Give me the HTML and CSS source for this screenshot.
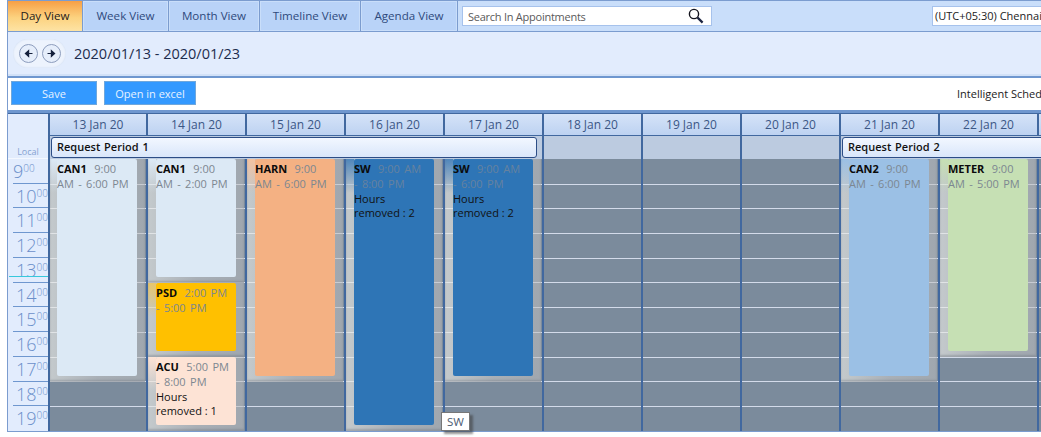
FILE: index.html
```html
<!DOCTYPE html>
<html>

<head>
    <title>Scheduler</title>
    <link rel="stylesheet" href="styles.css">
</head>

<body>
    <div class="scheduler">
        <div class="tabs">
            <a class="tab active tab-day">Day View</a>
            <a class="tab tab-week">Week View</a>
            <a class="tab tab-month">Month View</a>
            <a class="tab tab-timeline">Timeline View</a>
            <a class="tab tab-agenda">Agenda View</a>
            <div class="search">
                <span>Search In Appointments</span>
                <svg width="16" height="16" viewBox="0 0 16 16">
                    <circle cx="6" cy="6" r="4.6" fill="none" stroke="#14141e" stroke-width="1.4" />
                    <path d="M9.6 9.6l5 5" stroke="#1c2440" stroke-width="2.2" />
                </svg>
            </div>
            <div class="timezone">(UTC+05:30) Chennai</div>
        </div>

        <div class="nav">
            <div class="nav-buttons">
                <span class="round-btn">
                    <svg width="9" height="9" viewBox="0 0 9 9">
                        <path d="M8.5 4.5H3.5M4.6 1.6L1.4 4.5l3.2 2.9z" stroke="#14203c" stroke-width="1.2" fill="#14203c" />
                    </svg>
                </span>
                <span class="round-btn">
                    <svg width="9" height="9" viewBox="0 0 9 9">
                        <path d="M.5 4.5h5M4.4 1.6l3.2 2.9-3.2 2.9z" stroke="#14203c" stroke-width="1.2" fill="#14203c" />
                    </svg>
                </span>
            </div>
            <span class="date-range">2020/01/13 - 2020/01/23</span>
        </div>

        <div class="toolbar">
            <button class="btn btn-save">Save</button>
            <button class="btn btn-excel">Open in excel</button>
            <span class="toolbar-title">Intelligent Scheduling</span>
        </div>

        <div class="calendar">
            <div class="local">Local</div>
            <div class="days">
                <div class="day-head">13 Jan 20</div>
                <div class="day-head">14 Jan 20</div>
                <div class="day-head">15 Jan 20</div>
                <div class="day-head">16 Jan 20</div>
                <div class="day-head">17 Jan 20</div>
                <div class="day-head">18 Jan 20</div>
                <div class="day-head">19 Jan 20</div>
                <div class="day-head">20 Jan 20</div>
                <div class="day-head">21 Jan 20</div>
                <div class="day-head">22 Jan 20</div>
                <div class="day-head"></div>
            </div>
            <div class="periods">
                <div class="period-cell span-5-days">
                    <div class="period">Request Period 1</div>
                </div>
                <div class="period-cell"></div>
                <div class="period-cell"></div>
                <div class="period-cell"></div>
                <div class="period-cell span-3-days">
                    <div class="period">Request Period 2</div>
                </div>
            </div>
            <div class="hours">
                <div class="hour first">9<sup>00</sup></div>
                <div class="hour">10<sup>00</sup></div>
                <div class="hour">11<sup>00</sup></div>
                <div class="hour">12<sup>00</sup></div>
                <div class="hour now">13<sup>00</sup></div>
                <div class="hour">14<sup>00</sup></div>
                <div class="hour">15<sup>00</sup></div>
                <div class="hour">16<sup>00</sup></div>
                <div class="hour">17<sup>00</sup></div>
                <div class="hour">18<sup>00</sup></div>
                <div class="hour last">19<sup>00</sup></div>
            </div>
            <div class="grid">
                <div class="column">
                    <div class="event span-9 start-1 can1">
                        <div class="card"><b>CAN1</b> <i>9:00<br>AM - 6:00 PM</i></div>
                    </div>
                </div>
                <div class="column">
                    <div class="event span-5 start-1 can1">
                        <div class="card"><b>CAN1</b> <i>9:00<br>AM - 2:00 PM</i></div>
                    </div>
                    <div class="event span-3 start-6 psd">
                        <div class="card"><b>PSD</b> <i>2:00 PM<br>- 5:00 PM</i></div>
                    </div>
                    <div class="event span-3 start-9 acu">
                        <div class="card"><b>ACU</b> <i>5:00 PM<br>- 8:00 PM</i>
                            <p>Hours<br>removed : 1</p>
                        </div>
                    </div>
                </div>
                <div class="column">
                    <div class="event span-9 start-1 harn">
                        <div class="card"><b>HARN</b> <i>9:00<br>AM - 6:00 PM</i></div>
                    </div>
                </div>
                <div class="column">
                    <div class="event span-11 start-1 sw">
                        <div class="card"><b>SW</b> <i>9:00 AM<br>- 8:00 PM</i>
                            <p>Hours<br>removed : 2</p>
                        </div>
                    </div>
                </div>
                <div class="column">
                    <div class="event span-9 start-1 sw">
                        <div class="card"><b>SW</b> <i>9:00 AM<br>- 6:00 PM</i>
                            <p>Hours<br>removed : 2</p>
                        </div>
                    </div>
                </div>
                <div class="column"></div>
                <div class="column"></div>
                <div class="column"></div>
                <div class="column">
                    <div class="event span-9 start-1 can2">
                        <div class="card"><b>CAN2</b> <i>9:00<br>AM - 6:00 PM</i></div>
                    </div>
                </div>
                <div class="column">
                    <div class="event span-8 start-1 meter">
                        <div class="card"><b>METER</b> <i>9:00<br>AM - 5:00 PM</i></div>
                    </div>
                </div>
                <div class="column"></div>
            </div>
            <div class="tooltip">SW</div>
        </div>
    </div>
</body>

</html>
```

FILE: styles.css
```css
html,
body {
    margin: 0;
    height: 437px;
    overflow: hidden;
    background-color: #fff;
}

body {
    font-family: 'Open Sans', 'Noto Sans', sans-serif;
    color: #1f3864;
}

.scheduler {
    margin-left: 7px;
    width: 1140px;
    border-left: 1px solid #7b9ccf;
}

/* tab strip */
.tabs {
    display: flex;
    height: 32px;
    box-sizing: border-box;
    border-top: 1px solid #7b9ccf;
    border-bottom: 1px solid #7b9ccf;
    background-color: #c9defa;
}

.tab {
    display: flex;
    flex: none;
    align-items: center;
    justify-content: center;
    box-sizing: border-box;
    height: 30px;
    padding-bottom: 1px;
    border-right: 1px solid #7b9ccf;
    background: #b9d3f8;
    box-shadow: inset 0 0 0 1px #c9defa;
    color: #2f4a7c;
    font-size: 11.6px;
}

.tab-day {
    width: 75px;
}

.tab-week {
    width: 86px;
}

.tab-month {
    width: 91px;
}

.tab-timeline {
    width: 101px;
}

.tab-agenda {
    width: 97px;
}

.tab.active {
    background: linear-gradient(#f79f45, #fcd27f 55%, #fde3a4);
    box-shadow: none;
    color: #26201a;
}

.search {
    display: flex;
    flex: none;
    align-items: center;
    justify-content: space-between;
    box-sizing: border-box;
    width: 250px;
    height: 20px;
    margin: 5px 0 0 4px;
    padding: 0 7px 0 5px;
    border: 1px solid #a6c2ec;
    background-color: #fff;
    color: #5a5a5a;
    font-size: 11px;
    letter-spacing: -0.25px;
}

.timezone {
    flex: none;
    box-sizing: border-box;
    width: 200px;
    height: 20px;
    margin: 5px 0 0 220px;
    padding-left: 2px;
    border: 1px solid #a6c2ec;
    background-color: #fff;
    color: #222;
    font-size: 11px;
    line-height: 17px;
    white-space: nowrap;
}

/* date navigation */
.nav {
    display: flex;
    align-items: center;
    height: 46px;
    box-sizing: border-box;
    padding: 0 0 2px 5px;
    border-bottom: 2px solid #6f97cf;
    background-color: #e2ecfd;
    box-shadow: inset 0 -2px 0 #d2e1f7;
}

.nav-buttons {
    display: flex;
    gap: 4px;
    padding: 5px 5px 5px 6px;
    border-radius: 15px;
    background-color: #edf3fd;
    box-shadow: inset 0 0 2px #c6d6ee;
}

.round-btn {
    display: flex;
    align-items: center;
    justify-content: center;
    width: 19px;
    height: 19px;
    box-sizing: border-box;
    border: 1px solid #8d9dbd;
    border-radius: 50%;
    background-color: #e6eefb;
}

.date-range {
    margin-left: 8px;
    color: #1d2c4d;
    font-size: 14.5px;
}

/* buttons */
.toolbar {
    display: flex;
    align-items: center;
    height: 35px;
    box-sizing: border-box;
    padding: 0 0 2px 3px;
    border-bottom: 3px solid #6f97cf;
    background-color: #fff;
}

.btn {
    flex: none;
    height: 24px;
    padding: 0;
    border: 1px solid #6fa7dc;
    background-color: #3399ff;
    color: #e6f2ff;
    font-family: inherit;
    font-size: 11px;
}

.btn-save {
    width: 86px;
}

.btn-excel {
    width: 92px;
    margin-left: 7px;
}

.toolbar-title {
    flex: none;
    margin-left: 761px;
    color: #222;
    font-size: 11px;
    white-space: nowrap;
}

/* calendar */
.calendar {
    position: relative;
    display: grid;
    grid-template-columns: 40px auto;
    grid-template-rows: 22px 23px 272px;
    border-top: 1px solid #41689f;
    border-bottom: 1px solid #7b9ccf;
    background-color: #e2ecfd;
}

.local {
    display: flex;
    align-items: flex-end;
    justify-content: center;
    grid-row: 1 / span 2;
    padding-bottom: 1px;
    border-bottom: 1px solid #f4f8ff;
    color: #86a3d1;
    font-size: 9px;
    line-height: 10px;
}

.days,
.periods,
.grid {
    display: grid;
    grid-template-columns: 98px repeat(10, 99px);
}

.day-head {
    box-sizing: border-box;
    border-left: 2px solid #41689f;
    border-bottom: 1px solid #41689f;
    background: linear-gradient(#d5e3f8, #bdd2f1);
    color: #3b5685;
    font-size: 12px;
    line-height: 21px;
    text-align: center;
}

.period-cell {
    box-sizing: border-box;
    border-left: 2px solid #41689f;
    background-color: #bccbe0;
}

.span-5-days {
    grid-column-end: span 5;
}

.span-3-days {
    grid-column-end: span 3;
}

.period {
    box-sizing: border-box;
    height: 21px;
    margin: 1px 5px 0 1px;
    padding-left: 5px;
    border: 1px solid #2c4d86;
    border-radius: 3px;
    background: linear-gradient(#f2f7ff, #d9e6fa);
    color: #111;
    font-size: 11px;
    font-weight: 600;
    line-height: 18px;
    word-spacing: 1px;
}

.hours {
    display: grid;
    grid-template-rows: repeat(11, minmax(0, 1fr));
    margin-left: 5px;
}

.hour {
    position: relative;
    box-sizing: border-box;
    padding-left: 3px;
    border-bottom: 1px solid #6f97cf;
    color: #6b8fca;
    font-size: 18px;
    font-weight: 300;
    line-height: 25px;
}

.hour.first {
    padding-left: 0;
}

.hour.last {
    border-bottom: 0;
}

.hour sup {
    font-size: 10px;
    line-height: 0;
    vertical-align: 6px;
}

/* current time marker */
.hour.now::after {
    content: "";
    position: absolute;
    left: -4px;
    right: 0;
    bottom: 5px;
    height: 1px;
    background-color: #37c8dc;
}

.grid {
    background-color: #7b8b9c;
    background-image:
        linear-gradient(#7b8b9c 0 1px, transparent 1px),
        repeating-linear-gradient(#d3dbea 0 1px, #7b8b9c 1px 24.7px);
}

.column {
    display: grid;
    grid-template-rows: repeat(11, minmax(0, 1fr));
    box-sizing: border-box;
    border-left: 2px solid #41689f;
}

.start-1 {
    grid-row-start: 1;
}

.start-6 {
    grid-row-start: 6;
}

.start-9 {
    grid-row-start: 9;
}

.span-3 {
    grid-row-end: span 3;
}

.span-5 {
    grid-row-end: span 5;
}

.span-8 {
    grid-row-end: span 8;
}

.span-9 {
    grid-row-end: span 9;
}

.span-11 {
    grid-row-end: span 11;
}

.event {
    display: flex;
    min-height: 0;
    margin-right: 1px;
    padding: 0 8px 6px;
    background:
        linear-gradient(var(--tone), transparent 34px) left top / 8px 100% no-repeat,
        linear-gradient(90deg, rgba(235, 235, 230, 0.65), rgba(200, 200, 200, 0.6) 50%, rgba(190, 190, 190, 0.55));
    box-shadow: inset 0 -2px 2px rgba(110, 118, 128, 0.4);
}

.column:first-child .event {
    padding-left: 7px;
}

.card {
    flex: 1;
    min-width: 0;
    padding-top: 2px;
    border-radius: 2px;
    color: #7c8791;
    font-size: 11px;
    line-height: 15px;
    word-spacing: 1.5px;
    white-space: nowrap;
}

.card b {
    margin-right: 3px;
    color: #0b0b0b;
    font-weight: 700;
}

.card i {
    font-style: normal;
}

.card p {
    margin: 1px 0 0;
    color: #111;
    line-height: 14px;
    word-spacing: 0;
}

.can1 {
    --tone: #dce9f5;
}

.can2 {
    --tone: #9bc0e5;
}

.psd {
    --tone: #e8c66a;
}

.acu {
    --tone: #fde3d5;
}

.harn {
    --tone: #f4c3a2;
}

.sw {
    --tone: #4f86bb;
}

.meter {
    --tone: #c6e0b4;
}

.can1 .card {
    background-color: #dce9f5;
}

.can2 .card {
    background-color: #9bc0e5;
}

.psd .card {
    background-color: #ffc000;
}

.acu .card {
    background-color: #fde3d5;
}

.harn .card {
    background-color: #f4b183;
}

.sw .card {
    background-color: #2e75b6;
    color: #66829f;
}

.meter .card {
    background-color: #c6e0b4;
}

.tooltip {
    position: absolute;
    left: 433px;
    top: 298px;
    padding: 0 5px;
    border: 1px solid #777;
    background-color: #fff;
    box-shadow: 3px 3px 2px rgba(60, 60, 60, 0.55);
    color: #4a5a72;
    font-size: 11.5px;
    line-height: 17px;
}
```
